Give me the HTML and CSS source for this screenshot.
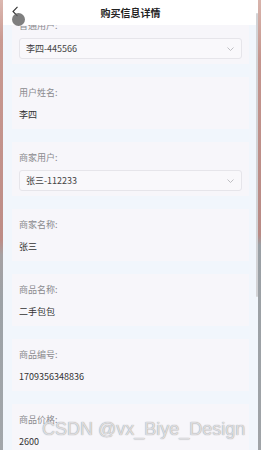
FILE: index.html
```html
<!DOCTYPE html>
<html lang="zh">
<head>
<meta charset="utf-8">
<title>购买信息详情</title>
<link rel="stylesheet" href="styles.css">
</head>
<body>
<div class="device">
  <div class="edge edge-left"></div>
  <div class="screen">
    <main class="content">
      <section class="card card-select">
        <div class="label">普通用户:</div>
        <div class="select"><span>李四-445566</span><svg class="caret" width="7" height="4" viewBox="0 0 7 4"><polyline points="0.5,0.5 3.5,3.5 6.5,0.5" fill="none" stroke="#b8b8bc" stroke-width="0.9"/></svg></div>
      </section>
      <section class="card">
        <div class="label">用户姓名:</div>
        <div class="value">李四</div>
      </section>
      <section class="card card-select">
        <div class="label">商家用户:</div>
        <div class="select"><span>张三-112233</span><svg class="caret" width="7" height="4" viewBox="0 0 7 4"><polyline points="0.5,0.5 3.5,3.5 6.5,0.5" fill="none" stroke="#b8b8bc" stroke-width="0.9"/></svg></div>
      </section>
      <section class="card">
        <div class="label">商家名称:</div>
        <div class="value">张三</div>
      </section>
      <section class="card">
        <div class="label">商品名称:</div>
        <div class="value">二手包包</div>
      </section>
      <section class="card">
        <div class="label">商品编号:</div>
        <div class="value">1709356348836</div>
      </section>
      <section class="card">
        <div class="label">商品价格:</div>
        <div class="value">2600</div>
      </section>
    </main>
    <header class="nav">
      <svg class="back" width="7" height="11" viewBox="0 0 7 11"><polyline points="5.5,0.8 1,5.5 5.5,10.2" fill="none" stroke="#333" stroke-width="1.1"/></svg>
      <h1 class="title">购买信息详情</h1>
    </header>
    <span class="dot"></span>
    <div class="scrollbar"></div>
    <div class="watermark">CSDN @vx_Biye_Design</div>
  </div>
  <div class="edge edge-right"></div>
</div>
</body>
</html>
```

FILE: styles.css
```css
html, body {
  margin: 0;
  padding: 0;
}
body {
  width: 261px;
  height: 450px;
  overflow: hidden;
  font-family: "Noto Sans CJK SC", "Noto Sans", sans-serif;
  background: #a0a5aa;
}
.device {
  display: flex;
  height: 450px;
}
.edge {
  width: 3px;
  flex: none;
}
.edge-left {
  background: linear-gradient(#dcb8b0 0, #c99a92 40px, #bd8c86 240px, #a5a1a3 255px, #9ca2a7 300px, #a2a7ab 450px);
}
.edge-right {
  background: linear-gradient(#d8b4ac 0, #c4958e 60px, #b88a85 235px, #9aa0a5 245px, #a0a4a8 450px);
}
.screen {
  flex: 1;
  position: relative;
  overflow: hidden;
  background: #f1f6fc;
}
.nav {
  position: absolute;
  top: 0;
  left: 0;
  right: 0;
  height: 25px;
  background: #fff;
  display: flex;
  align-items: center;
  justify-content: center;
}
.title {
  margin: 0;
  font-size: 10px;
  font-weight: 700;
  color: #222;
  line-height: 25px;
}
.back {
  position: absolute;
  left: 9px;
  top: 6px;
}
.dot {
  position: absolute;
  left: 8.5px;
  top: 13px;
  width: 13px;
  height: 13px;
  border-radius: 50%;
  background: rgba(95, 95, 95, 0.8);
}
.content {
  padding-top: 10px;
}
.card {
  margin: 0 9px 13px;
  background: #f7f6fa;
  padding: 10px 7px 8px;
}
.card-select {
  padding-bottom: 5px;
}
.label {
  font-size: 9px;
  line-height: 12px;
  color: #8a8a8e;
}
.value {
  margin-top: 10px;
  font-size: 9px;
  line-height: 12px;
  color: #333;
}
.select {
  margin-top: 6px;
  height: 21px;
  box-sizing: border-box;
  border: 1px solid #e6e5ea;
  border-radius: 3px;
  background: #f9f8fb;
  display: flex;
  align-items: center;
  justify-content: space-between;
  padding: 0 6px;
  font-size: 9px;
  color: #444;
}
.caret {
  margin-right: 1px;
}
.scrollbar {
  position: absolute;
  right: 0;
  top: 13px;
  width: 2.5px;
  height: 284px;
  background: #d2d3d6;
  border-radius: 1px;
}
.watermark {
  position: absolute;
  left: 39px;
  top: 420px;
  font-family: "Liberation Sans", Arial, sans-serif;
  font-size: 18px;
  line-height: 18px;
  color: rgba(235, 235, 238, 0.85);
  text-shadow: 0 0 1px rgba(80, 80, 80, 0.7);
  white-space: nowrap;
}
```
